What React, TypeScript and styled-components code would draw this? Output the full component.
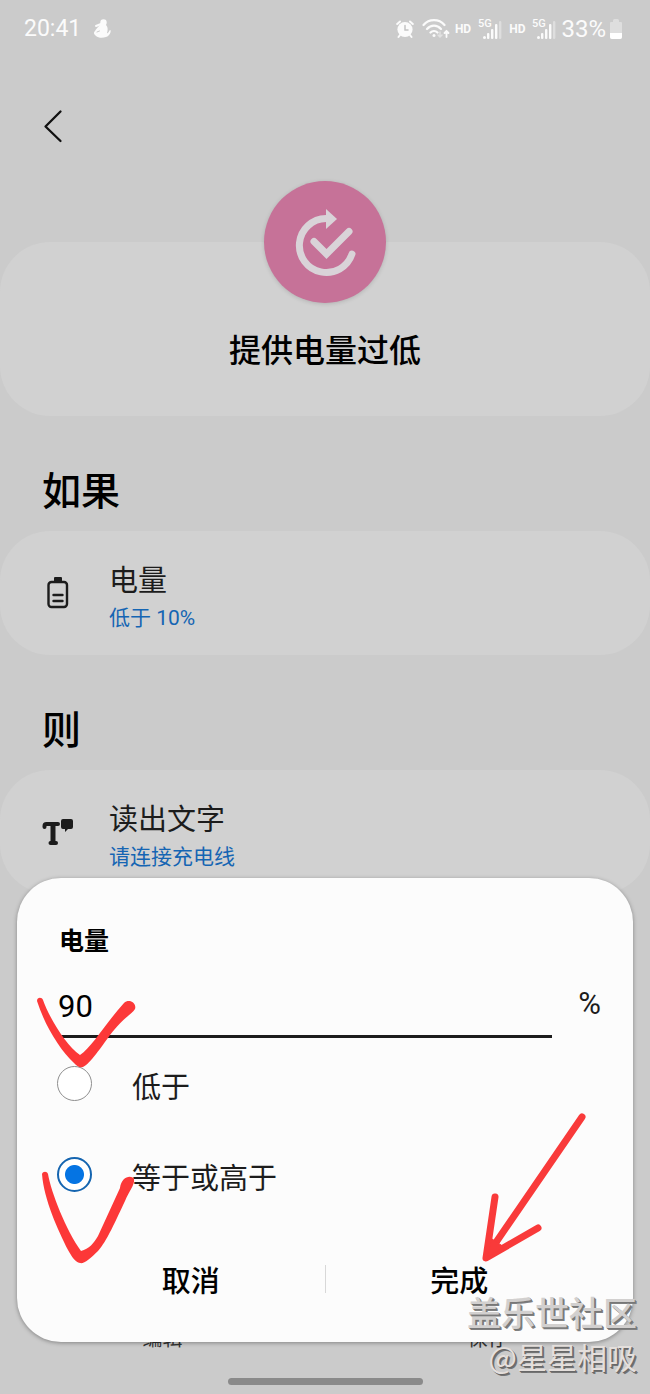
import React, { useState } from "react";
import styled, { createGlobalStyle } from "styled-components";

const latinFirst = `Roboto, "Noto Sans CJK SC", sans-serif`;
const cjkFirst = `"Noto Sans CJK SC", sans-serif`;

const GlobalStyle = createGlobalStyle`
  *, *::before, *::after { box-sizing: border-box; }
  body { margin: 0; background: #cbcbcb; font-family: ${latinFirst}; color: #000; }
  h1, h2, h3, p { margin: 0; }
  button, input { font-family: inherit; }
`;

const Page = styled.div`
  position: relative;
  min-height: 100vh;
  display: flex;
  flex-direction: column;
  background: #cbcbcb;
  overflow: hidden;
`;

const StatusBar = styled.header`
  display: flex;
  align-items: center;
  justify-content: space-between;
  height: 57px;
  padding: 0 27px 0 24px;
  color: #fbfbfb;
  line-height: 28px;
`;

const StatusGroup = styled.div<{ $gap: number }>`
  display: flex;
  align-items: center;
  gap: ${(p) => p.$gap}px;
`;

const Clock = styled.span`
  font-size: 23px;
`;

const Charge = styled.span`
  font-size: 24px;
`;

const Hd = styled.span`
  font-size: 12px;
  font-weight: 700;
`;

const TopBar = styled.nav`
  display: flex;
  align-items: center;
  height: 72px;
  margin-top: 33px;
  padding: 0 32px;
`;

const BackButton = styled.button`
  display: flex;
  padding: 4px;
  border: 0;
  background: none;
`;

const Panel = styled.section`
  background: #d1d1d1;
  border-radius: 50px;
`;

const Hero = styled(Panel)`
  display: flex;
  flex-direction: column;
  align-items: center;
  height: 174px;
  margin-top: 80px;
`;

const HeroIcon = styled.div`
  width: 122px;
  height: 122px;
  margin-top: -61px;
  border-radius: 50%;
  background: #c67298;
  box-shadow: 0 1px 4px rgba(0, 0, 0, 0.15);
`;

const HeroTitle = styled.h1`
  margin-top: 24px;
  font-size: 32px;
  line-height: 48px;
  font-weight: 500;
`;

const SectionTitle = styled.h2`
  margin-top: 48px;
  padding: 0 42px;
  font-size: 39px;
  line-height: 56px;
  font-weight: 500;
`;

const Entry = styled(Panel)`
  display: flex;
  align-items: center;
  height: 124px;
  margin-top: 11px;
  padding: 0 40px;
`;

const EntryIcon = styled.span`
  display: flex;
  justify-content: center;
  width: 36px;
`;

const EntryText = styled.div`
  margin-left: 33px;
  padding-top: 7px;
`;

const EntryName = styled.p`
  color: #1c1c1c;
  font-size: 29px;
  line-height: 42px;
`;

const EntryDetail = styled.p`
  color: #1565b3;
  font-size: 21px;
  line-height: 32px;
`;

const BottomBar = styled.footer`
  margin-top: auto;
  height: 74px;
  display: flex;
  flex-direction: column;
  justify-content: space-between;
  align-items: center;
  padding-bottom: 9px;
`;

const Actions = styled.div`
  display: flex;
  width: 100%;
`;

const BarAction = styled.button`
  flex: 1;
  padding: 0;
  border: 0;
  background: none;
  color: #333;
  font-family: ${cjkFirst};
  font-size: 20px;
  line-height: 36px;
`;

const HomeHandle = styled.div`
  width: 30%;
  height: 7px;
  border-radius: 4px;
  background: #8a8a8a;
`;

const Dialog = styled.form`
  position: absolute;
  left: 17px;
  right: 17px;
  bottom: 52px;
  padding: 41px 40px 39px;
  border-radius: 44px;
  background: #fcfcfc;
  box-shadow: 0 1px 4px rgba(0, 0, 0, 0.35);
`;

const DialogTitle = styled.h3`
  padding-left: 2px;
  font-family: ${cjkFirst};
  font-size: 25px;
  line-height: 40px;
  font-weight: 700;
`;

const ValueRow = styled.div`
  display: flex;
  align-items: flex-start;
  gap: 26px;
  margin-top: 18px;
`;

const ValueInput = styled.input`
  flex: 1;
  min-width: 0;
  height: 61px;
  margin-left: 1px;
  padding: 0;
  border: 0;
  border-bottom: 3px solid #1c1c1c;
  border-radius: 0;
  outline: 0;
  background: none;
  font-size: 31px;
  color: #000;
`;

const Unit = styled.label`
  margin-right: -8px;
  color: #1c1c1c;
  font-size: 31px;
  line-height: 53px;
`;

const Options = styled.div`
  margin-top: 22px;
  display: flex;
  flex-direction: column;
  gap: 45px;
`;

const Option = styled.label`
  display: flex;
  align-items: center;
  gap: 40px;
  color: #1c1c1c;
  font-family: ${cjkFirst};
  font-size: 29px;
  line-height: 42px;
`;

const OptionText = styled.span`
  padding-top: 4px;
`;

const Radio = styled.input`
  appearance: none;
  width: 35px;
  height: 35px;
  margin: 0;
  border: 1px solid #8f8f8f;
  border-radius: 50%;
  background: #fff;

  &:checked {
    border: 2px solid #1565b0;
    background: radial-gradient(circle, #0574e3 9px, #fff 10px);
  }
`;

const DialogActions = styled.div`
  display: flex;
  align-items: center;
  margin-top: 58px;
`;

const ActionCell = styled.div`
  position: relative;
  flex: 1;
  display: flex;
`;

const ActionButton = styled.button`
  flex: 1;
  padding: 0;
  border: 0;
  background: none;
  color: #000;
  font-family: ${cjkFirst};
  font-size: 29px;
  line-height: 48px;
  font-weight: 500;
`;

const Divider = styled.span`
  width: 1px;
  height: 28px;
  background: #d8d8d8;
`;

const CheckStroke = styled.svg<{ $top: number }>`
  position: absolute;
  left: 13px;
  top: ${(p) => p.$top}px;
  pointer-events: none;
`;

const ArrowStroke = styled.svg`
  position: absolute;
  left: calc(50% + 19px);
  bottom: 40px;
  pointer-events: none;
`;

const Watermark = styled.div`
  position: absolute;
  right: 13px;
  bottom: 16px;
  text-align: right;
  font-family: ${cjkFirst};
  font-size: 30px;
  line-height: 44px;
  pointer-events: none;
`;

const Community = styled.p`
  color: #d2d0cf;
  font-size: 34px;
  font-weight: 500;
  text-shadow: 1px 1px 0 #777, 2px 2px 0 #808080;
`;

const Author = styled.p`
  color: #e4dfdc;
  text-shadow: 1px 1px 0 #686868, 2px 2px 0 #747474;
`;

const MascotIcon = () => (
  <svg width="18" height="20" viewBox="0 0 18 20" fill="#fbfbfb">
    <circle cx="9.500" cy="3.500" r="3.200" />
    <path d="M7 6h5c2 2 2 5 1 8 1 1 2-2 3-3 1 0 1 3-1 5-2 3-10 4-13 1-2-2-3-3-1-5 1-2 3-4 5-6z" />
    <path d="M2 7l5-2" stroke="#fbfbfb" strokeWidth="2" strokeLinecap="round" />
    <path d="M3 13l2.500-1" stroke="#cbcbcb" strokeLinecap="round" />
  </svg>
);

const AlarmIcon = () => (
  <svg width="18" height="20" viewBox="0 0 18 20" fill="none" stroke="#fbfbfb" strokeLinecap="round">
    <circle cx="9" cy="10.500" r="7.600" fill="#fbfbfb" stroke="none" />
    <path d="M1.200 5L4 2.500M16.800 5L14 2.500M4 16l-1.500 2M14 16l1.500 2" strokeWidth="2" />
    <path d="M9 6.500V11h3" stroke="#c4c4c4" strokeWidth="1.500" />
  </svg>
);

const WifiIcon = () => (
  <svg width="28" height="20" viewBox="0 0 28 20" fill="none" stroke="#fbfbfb" strokeWidth="2.200" strokeLinecap="round">
    <path d="M1.500 6C7-.5 17-.5 22.500 6M5 10c4-4.500 10-4.500 14 0M8.500 13.500c2-2 5-2 7 0" />
    <circle cx="12" cy="16.500" r="1.500" fill="#fbfbfb" stroke="none" />
    <path d="M18 13v5M16 16l2 2 2-2" stroke="#e2e2e2" strokeWidth="1.500" />
    <path d="M24.500 18v-6M22.500 14l2-2 2 2" strokeWidth="1.800" />
  </svg>
);

const SignalIcon = () => (
  <svg width="24" height="22" viewBox="0 0 24 22" fill="#fbfbfb">
    <text x="0" y="9" fontSize="11" fontWeight="500" fontFamily="Roboto, sans-serif">5G</text>
    <circle cx="6.500" cy="19.500" r="1.500" />
    <rect x="9" y="15" width="2.400" height="6" rx="1" />
    <rect x="13" y="11" width="2.400" height="10" rx="1" />
    <rect x="17" y="6" width="2.400" height="15" rx="1" />
    <rect x="21" y="3" width="2.400" height="18" rx="1" opacity="0.4" />
  </svg>
);

const BatteryStatusIcon = () => (
  <svg width="14" height="20" viewBox="0 0 14 20">
    <path d="M4 1.500Q4 0 5.500 0h3Q10 0 10 1.500V3h2q1 0 1 1v14q0 2-2 2H3q-2 0-2-2V4q0-1 1-1h2z" fill="#dedede" />
    <path d="M1 14h12v4q0 2-2 2H3q-2 0-2-2z" fill="#fff" />
  </svg>
);

const BackIcon = () => (
  <svg width="34" height="36" viewBox="0 0 34 36" fill="none" stroke="#111" strokeWidth="2.300" strokeLinecap="round" strokeLinejoin="round">
    <path d="M24.500 3.500L9.500 18.500l15 14.500" />
  </svg>
);

const RoutineIcon = () => (
  <svg width="122" height="122" viewBox="0 0 122 122" fill="none" stroke="#d9d3d8" strokeWidth="7" strokeLinecap="round">
    <path d="M62 37.500A27 27 0 1 0 88 73" />
    <path d="M50 60.500L62.500 73L85 50.500" strokeLinejoin="miter" />
    <path d="M62 28L73 38L62 48Z" fill="#d9d3d8" stroke="none" />
  </svg>
);

const BatteryIcon = () => (
  <svg width="24" height="32" viewBox="0 0 24 32" fill="none" stroke="#1c1c1c" strokeWidth="2.400" strokeLinecap="round">
    <rect x="2.500" y="5" width="18.500" height="25" rx="3" />
    <path d="M9 0h6q1 0 1 1v4H8V1q0-1 1-1z" fill="#1c1c1c" stroke="none" />
    <path d="M7.500 18h9M7.500 24h9" />
  </svg>
);

const SpeakTextIcon = () => (
  <svg width="32" height="28" viewBox="0 0 32 28" fill="none" stroke="#1c1c1c" strokeWidth="4" strokeLinecap="round" strokeLinejoin="round">
    <path d="M2.500 9V8q0-2 2-2H16" />
    <path d="M11 6v18" strokeWidth="5" strokeLinecap="butt" />
    <path d="M8.500 25h5.500" />
    <path d="M21 1h8q2 0 2 2v6q0 2-2 2h-3l-3 3v-3h-2q-2 0-2-2V3q0-2 2-2z" fill="#1c1c1c" stroke="none" />
  </svg>
);

export default function App() {
  const [level, setLevel] = useState("90");
  const [mode, setMode] = useState("above");
  return (
    <Page>
      <GlobalStyle />
      <StatusBar>
        <StatusGroup $gap={13}>
          <Clock>20:41</Clock>
          <MascotIcon />
        </StatusGroup>
        <StatusGroup $gap={5}>
          <StatusGroup $gap={8}>
            <AlarmIcon />
            <WifiIcon />
          </StatusGroup>
          <StatusGroup $gap={7}>
            <Hd>HD</Hd>
            <SignalIcon />
            <Hd>HD</Hd>
            <SignalIcon />
          </StatusGroup>
          <StatusGroup $gap={3}>
            <Charge>33%</Charge>
            <BatteryStatusIcon />
          </StatusGroup>
        </StatusGroup>
      </StatusBar>
      <TopBar>
        <BackButton type="button" aria-label="返回">
          <BackIcon />
        </BackButton>
      </TopBar>
      <Hero>
        <HeroIcon>
          <RoutineIcon />
        </HeroIcon>
        <HeroTitle>提供电量过低</HeroTitle>
      </Hero>
      <SectionTitle>如果</SectionTitle>
      <Entry>
        <EntryIcon>
          <BatteryIcon />
        </EntryIcon>
        <EntryText>
          <EntryName>电量</EntryName>
          <EntryDetail>低于 10%</EntryDetail>
        </EntryText>
      </Entry>
      <SectionTitle>则</SectionTitle>
      <Entry>
        <EntryIcon>
          <SpeakTextIcon />
        </EntryIcon>
        <EntryText>
          <EntryName>读出文字</EntryName>
          <EntryDetail>请连接充电线</EntryDetail>
        </EntryText>
      </Entry>
      <BottomBar>
        <Actions>
          <BarAction type="button">编辑</BarAction>
          <BarAction type="button">保存</BarAction>
        </Actions>
        <HomeHandle />
      </BottomBar>
      <Dialog onSubmit={(e) => e.preventDefault()}>
        <DialogTitle>电量</DialogTitle>
        <ValueRow>
          <ValueInput id="level" value={level} onChange={(e) => setLevel(e.target.value)} />
          <Unit htmlFor="level">%</Unit>
        </ValueRow>
        <Options>
          <Option>
            <Radio type="radio" name="mode" checked={mode === "below"} onChange={() => setMode("below")} />
            <OptionText>低于</OptionText>
          </Option>
          <Option>
            <Radio type="radio" name="mode" checked={mode === "above"} onChange={() => setMode("above")} />
            <OptionText>等于或高于</OptionText>
          </Option>
        </Options>
        <DialogActions>
          <ActionCell>
            <ActionButton type="button">取消</ActionButton>
          </ActionCell>
          <Divider />
          <ActionCell>
            <ActionButton type="submit">完成</ActionButton>
            <ArrowStroke width="110" height="152" viewBox="478 1110 110 152" fill="none" stroke="#f93a3a" strokeWidth="7" strokeLinecap="round" strokeLinejoin="round">
              <path d="M582 1116L488 1253M495 1196L486 1257L538 1227" />
              <path d="M487 1256L492 1238L504 1246Z" fill="#f93a3a" strokeWidth="1" />
            </ArrowStroke>
          </ActionCell>
        </DialogActions>
        <CheckStroke $top={112} width="120" height="90" viewBox="30 990 120 90" fill="#fc3838">
          <path d="M37 1001C37 997 42 997 43 1000C48 1015 66 1046 80 1055C92 1047 105 1024 124 1003C129 998 137 1003 135 1009C132 1014 122 1019 110 1035C102 1046 90 1064 83 1067C79 1068 77 1066 74 1063C60 1050 45 1026 37 1001Z" />
        </CheckStroke>
        <CheckStroke $top={282} width="120" height="110" viewBox="30 1160 120 110" fill="#fc3838">
          <path d="M42 1174C43 1171 47 1171 48 1174C51 1192 66 1230 81 1251C89 1249 94 1243 98 1236L120 1188C121 1177 131 1174 134 1179C135 1185 129 1191 125 1201C117 1218 106 1243 98 1251C90 1259 84 1264 80 1263C75 1262 72 1257 68 1250C58 1230 44 1200 42 1174Z" />
        </CheckStroke>
      </Dialog>
      <Watermark>
        <Community>盖乐世社区</Community>
        <Author>@星星相吸</Author>
      </Watermark>
    </Page>
  );
}
